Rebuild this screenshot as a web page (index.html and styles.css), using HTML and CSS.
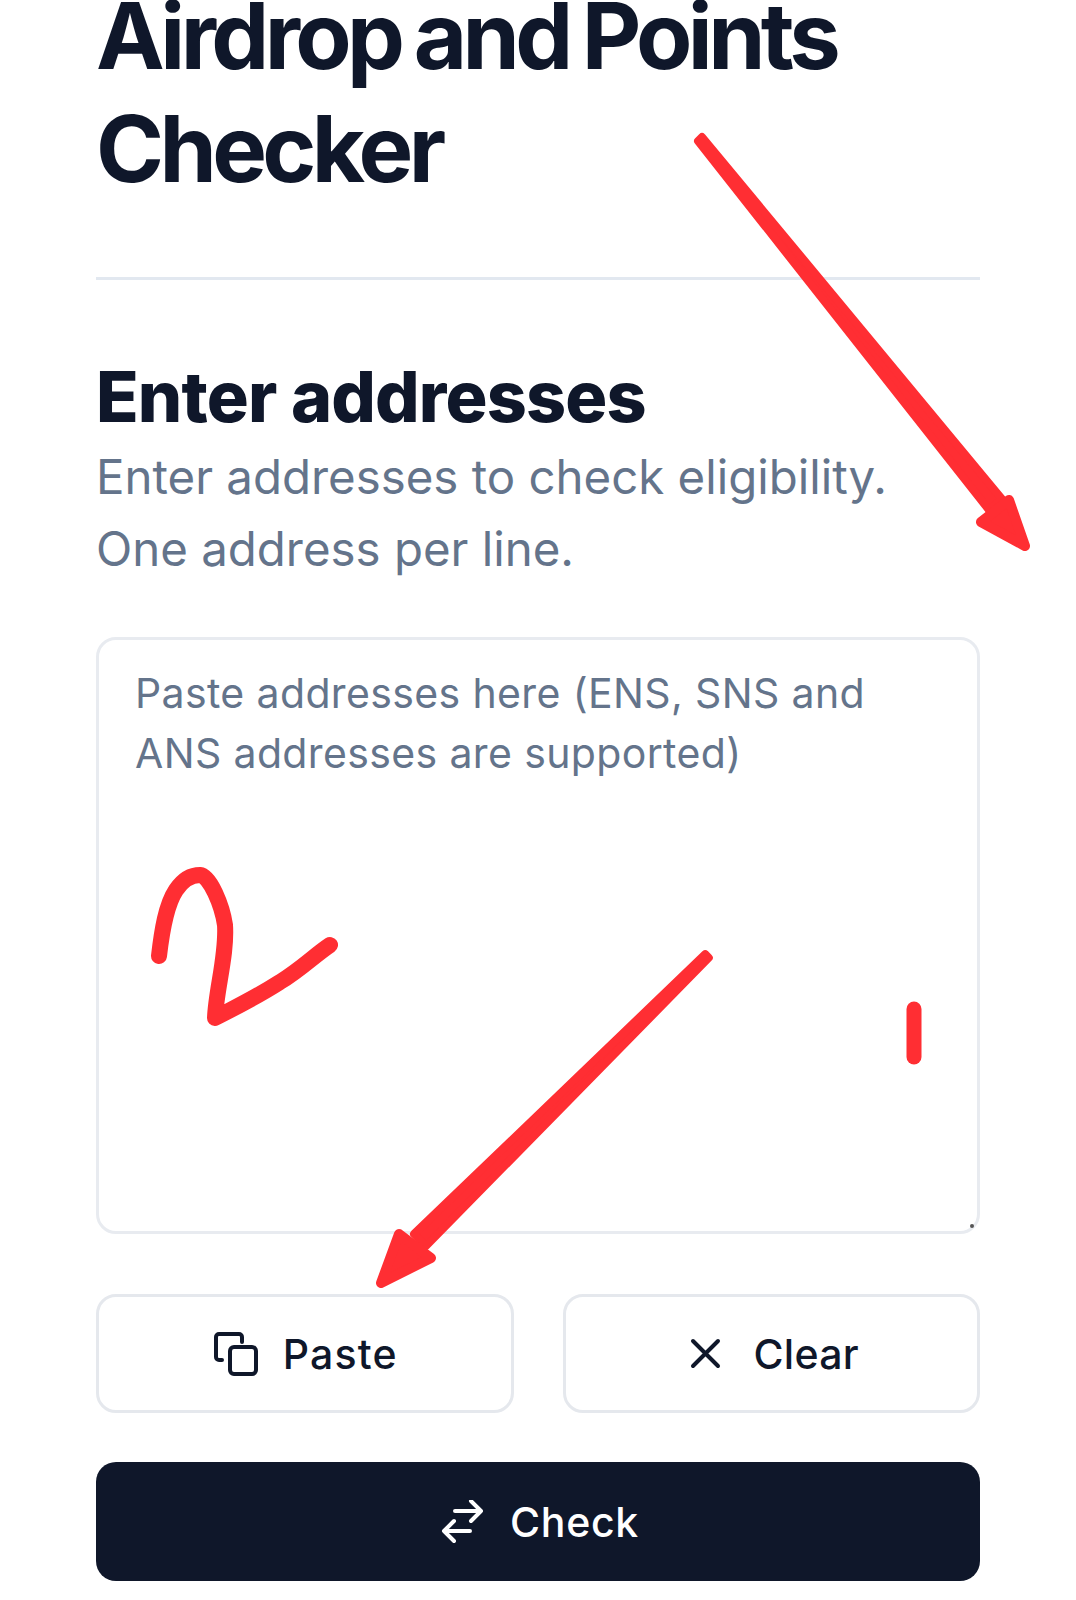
FILE: index.html
```html
<!DOCTYPE html>
<html lang="en">
<head>
<meta charset="utf-8">
<title>Airdrop and Points Checker</title>
<link rel="stylesheet" href="styles.css">
</head>
<body>
<main class="page">
  <h1 class="title">Airdrop and Points Checker</h1>
  <hr class="divider">
  <h2 class="subtitle">Enter addresses</h2>
  <p class="lead">Enter addresses to check eligibility.<br>One address per line.</p>
  <div class="field">Paste addresses here (ENS, SNS and ANS addresses are supported)</div>
  <div class="actions">
    <button class="btn paste">
      <svg class="icon" viewBox="0 0 44 44" fill="none" stroke="currentColor" stroke-width="4" stroke-linecap="round" stroke-linejoin="round"><rect x="16" y="15" width="26" height="27" rx="4"/><path d="M8 28H5a3 3 0 0 1-3-3V5a3 3 0 0 1 3-3h20a3 3 0 0 1 3 3v5"/></svg>
      Paste
    </button>
    <button class="btn">
      <svg class="icon" viewBox="0 0 44 44" fill="none" stroke="currentColor" stroke-width="4" stroke-linecap="round"><path d="M10 9l25 25M35 9L10 34"/></svg>
      Clear
    </button>
  </div>
  <button class="btn primary">
    <svg class="icon" viewBox="0 0 44 44" fill="none" stroke="currentColor" stroke-width="4" stroke-linecap="round" stroke-linejoin="round"><path d="M15 11h26M31 1l10 10-10 10M30 31H4M14 21L4 31l10 10"/></svg>
    Check
  </button>
</main>
<svg class="marks" viewBox="0 0 1076 1600" fill="#ff2e33" stroke="#ff2e33" stroke-linecap="round" stroke-linejoin="round">
  <path d="M702 137L1002 499L989 510L698 141Z" stroke-width="8"/>
  <path d="M1009 500L1025 546L981 522Z" stroke-width="10"/>
  <path d="M708.800 957.800L426 1246L414 1234L705.200 954.200Z" stroke-width="8"/>
  <path d="M399 1234L431 1258L381 1283Z" stroke-width="10"/>
  <path d="M914 1009V1057" fill="none" stroke-width="15"/>
  <path d="M159 956C162 930 166 905 176 890C184 878 192 875 200 875C210 876 222 905 225 925C227 955 216 990 215 1018C240 1005 255 998 280 982C300 970 315 955 330 945" fill="none" stroke-width="16"/>
</svg>
</body>
</html>
```
FILE: styles.css
```css
* { box-sizing: border-box; }
html, body { margin: 0; background: #fff; }
body { position: relative; width: 1076px; height: 1600px; overflow: hidden; font-family: Inter, "Liberation Sans", sans-serif; color: #0f172a; }
.page { display: flex; flex-direction: column; padding: 0 96px; }
.title { margin: -21px 0 0; font-size: 92px; line-height: 113px; font-weight: 730; letter-spacing: -0.05em; word-spacing: -4px; }
.divider { width: 100%; height: 3px; margin: 72px 0 0; border: 0; background: #e2e8f0; }
.subtitle { margin: 76px 0 0; font-size: 70px; line-height: 82px; font-weight: 800; letter-spacing: -0.012em; }
.lead { margin: 3px 0 0; font-size: 47.4px; line-height: 72px; color: #64748b; }
.field { position: relative; height: 597px; margin-top: 52px; padding: 23px 36px; border: 3px solid #e8ebf0; border-radius: 20px; font-size: 41px; line-height: 60px; letter-spacing: 0.37px; color: #64748b; }
.field::after { content: ""; position: absolute; right: 3px; bottom: 3px; width: 4px; height: 4px; border-radius: 50%; background: #555; }
.actions { display: grid; grid-template-columns: 1fr 1fr; gap: 49px; margin-top: 60px; }
.btn { display: flex; align-items: center; justify-content: center; gap: 26px; width: 100%; height: 119px; border: 3px solid #e5e8ed; border-radius: 20px; background: #fff; color: #0f172a; font: 500 41px Inter, "Liberation Sans", sans-serif; letter-spacing: 0.3px; }
.paste { gap: 25px; padding-left: 8px; letter-spacing: 1.2px; }
.primary { margin-top: 49px; padding-left: 9px; border: 0; background: #0f172a; color: #fff; letter-spacing: 0.7px; }
.icon { width: 44px; height: 44px; flex: none; }
.marks { position: absolute; inset: 0; width: 1076px; height: 1600px; pointer-events: none; }
```
